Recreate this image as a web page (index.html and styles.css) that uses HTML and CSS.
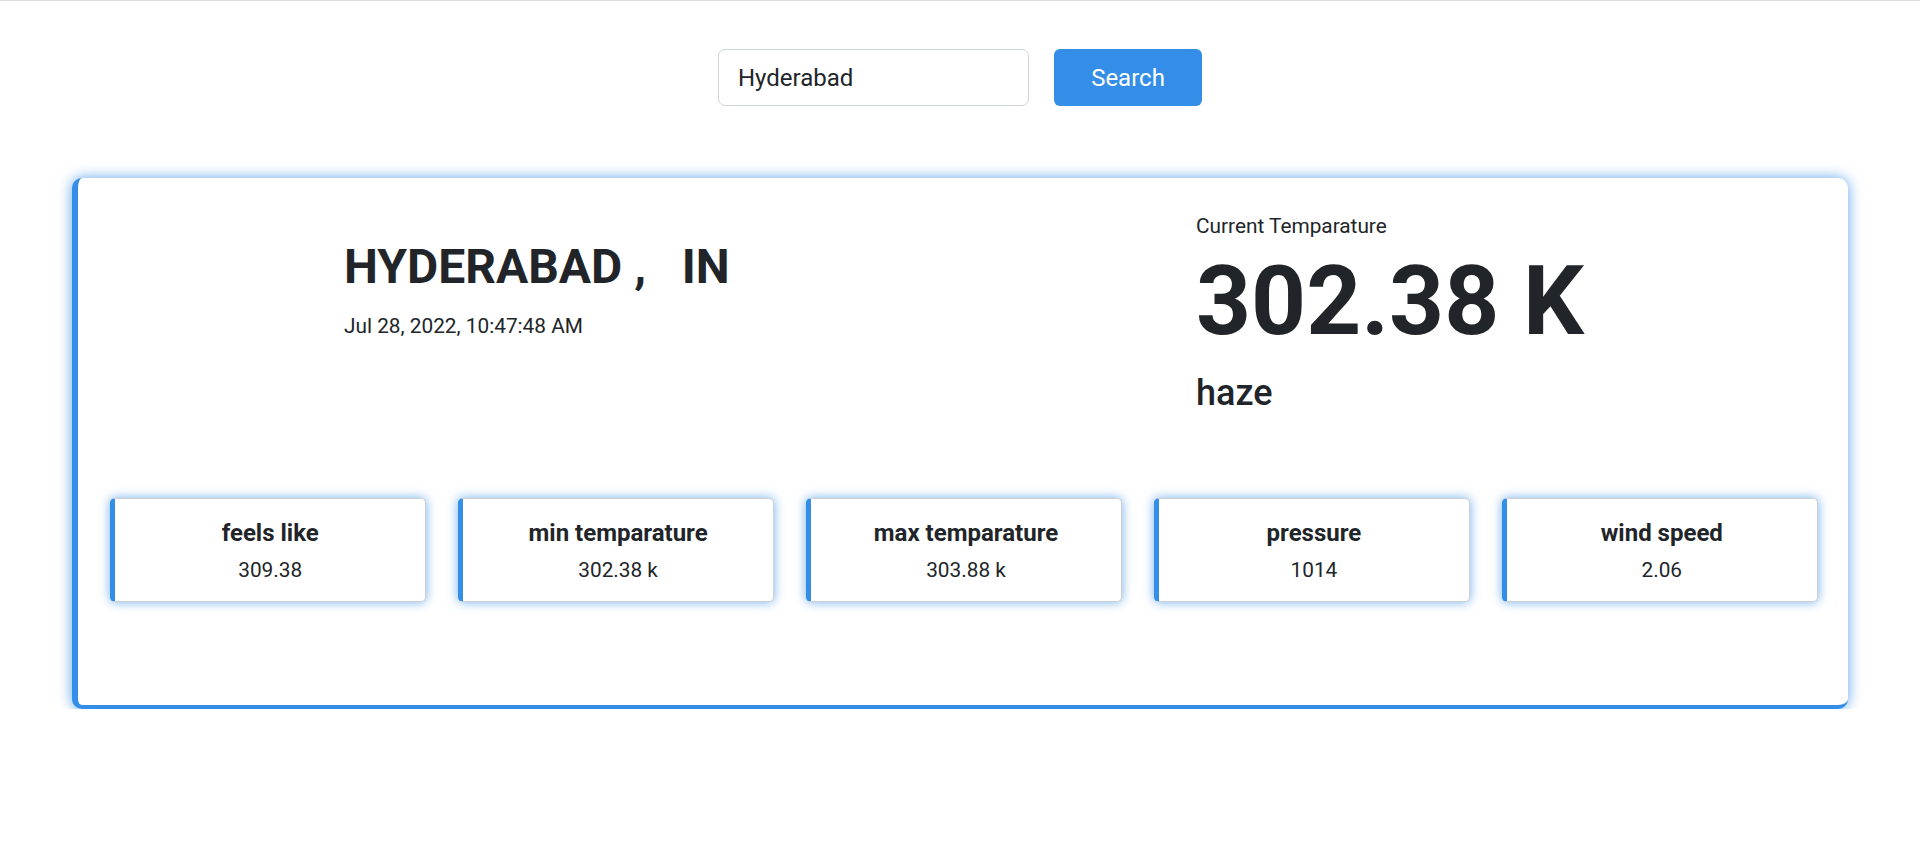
FILE: index.html
```html
<!DOCTYPE html>
<html lang="en">
<head>
<meta charset="utf-8">
<title>Weather</title>
<link rel="stylesheet" href="styles.css">
</head>
<body>
<div class="app">
  <form class="search">
    <input class="search-input" type="text" value="Hyderabad">
    <button class="search-btn" type="button">Search</button>
  </form>
  <div class="weather-card">
    <div class="top">
      <div class="place">
        <h1 class="city">HYDERABAD ,&nbsp;&nbsp;&nbsp;IN</h1>
        <p class="date">Jul 28, 2022, 10:47:48 AM</p>
      </div>
      <div class="current">
        <p class="label">Current Temparature</p>
        <div class="temp">302.38 K</div>
        <h3 class="desc">haze</h3>
      </div>
    </div>
    <div class="stats">
      <div class="stat"><h5 class="stat-title">feels like</h5><p class="stat-value">309.38</p></div>
      <div class="stat"><h5 class="stat-title">min temparature</h5><p class="stat-value">302.38 k</p></div>
      <div class="stat"><h5 class="stat-title">max temparature</h5><p class="stat-value">303.88 k</p></div>
      <div class="stat"><h5 class="stat-title">pressure</h5><p class="stat-value">1014</p></div>
      <div class="stat"><h5 class="stat-title">wind speed</h5><p class="stat-value">2.06</p></div>
    </div>
  </div>
</div>
</body>
</html>
```

FILE: styles.css
```css
* { box-sizing: border-box; }
html, body { margin: 0; padding: 0; }
body {
  font-family: Roboto, "Liberation Sans", Arial, sans-serif;
  font-size: 20.8px;
  line-height: 1.5;
  color: #212529;
  background: #fff;
}
.app {
  border-top: 1px solid #dcdcdc;
  padding: 48px 72px 0 72px;
}
.search {
  display: flex;
  justify-content: center;
  gap: 25px;
  margin: 0;
}
.search-input {
  width: 311px;
  height: 57px;
  padding: 0 19px;
  font-family: inherit;
  font-size: 24px;
  color: #212529;
  border: 1px solid #ced4da;
  border-radius: 7px;
  outline: none;
}
.search-btn {
  width: 148px;
  height: 57px;
  font-family: inherit;
  font-size: 24px;
  color: #fff;
  background: #348de6;
  border: none;
  border-radius: 6px;
}
.weather-card {
  margin-top: 72px;
  height: 531px;
  background: #fff;
  border-left: 6px solid #348de6;
  border-bottom: 4px solid #348de6;
  border-radius: 10px;
  box-shadow: 0 0 14px rgba(52, 141, 230, 0.8);
  padding-top: 33px;
}
.top {
  display: grid;
  grid-template-columns: 1fr 1fr;
  height: 287px;
}
.place { padding-left: 266px; padding-top: 27px; }
.current { padding-left: 233px; }
.city {
  margin: 0;
  font-size: 48px;
  font-weight: 700;
  line-height: 1.2;
}
.date { margin: 15px 0 0; }
.label { margin: 0 0 2px; }
.temp {
  font-size: 96px;
  font-weight: 700;
  line-height: 1.2;
}
.desc {
  margin: 13px 0 0;
  font-size: 36px;
  font-weight: 500;
  line-height: 1.2;
}
.stats {
  display: grid;
  grid-template-columns: repeat(5, 1fr);
  gap: 31.5px;
  padding: 0 30px 0 32px;
}
.stat {
  height: 104px;
  padding-top: 20px;
  text-align: center;
  background: #fff;
  border: 1px solid #d0d0d0;
  border-left: 5px solid #348de6;
  border-radius: 5px;
  box-shadow: 0 0 11px rgba(52, 141, 230, 0.7);
}
.stat-title {
  margin: 0 0 7px;
  font-size: 24px;
  font-weight: 700;
  line-height: 1.2;
}
.stat-value { margin: 0; }
```
